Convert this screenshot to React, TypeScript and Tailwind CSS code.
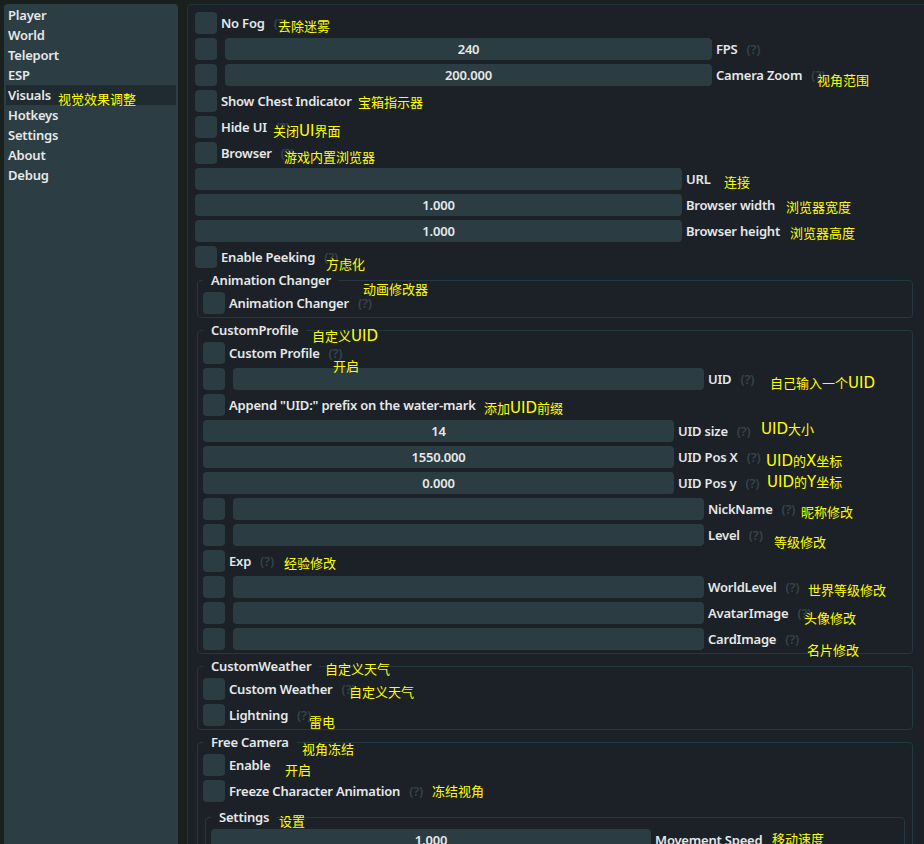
import React from "react";

function Box() {
  return <div className="w-[22px] h-[22px] rounded-[4px] bg-[#2b3c42] shrink-0" />;
}

function Help() {
  return <span className="ml-[9px] pt-[2px] text-[#34444b] whitespace-nowrap">(?)</span>;
}

function CheckRow({ label, help }: { label: string; help?: boolean }) {
  return (
    <div className="flex items-center h-[22px]">
      <Box />
      <span className="ml-1 pt-[2px] whitespace-nowrap">{label}</span>
      {help && <Help />}
    </div>
  );
}

function FieldRow({
  check,
  w,
  value,
  label,
  help,
}: {
  check?: boolean;
  w: string;
  value?: string;
  label: string;
  help?: boolean;
}) {
  return (
    <div className="flex items-center h-[22px]">
      {check && (
        <>
          <Box />
          <div className="w-2 shrink-0" />
        </>
      )}
      <div className={`${w} h-[22px] pt-[2px] rounded-[4px] bg-[#2b3c42] flex items-center justify-center shrink-0`}>
        {value}
      </div>
      <span className="ml-1 pt-[2px] whitespace-nowrap">{label}</span>
      {help && <Help />}
    </div>
  );
}

function Group({ title, children, extra }: { title: string; children: React.ReactNode; extra?: string }) {
  return (
    <fieldset
      className={`mx-[2px] px-[5px] pt-[3px] pb-[3px] border border-[#233840] rounded-[4px] min-w-0 ${extra ?? ""}`}
    >
      <legend className="px-2 leading-[17px] whitespace-nowrap">{title}</legend>
      <div className="flex flex-col gap-1">{children}</div>
    </fieldset>
  );
}

const notes: { t: string; c: string }[] = [
  { t: "去除迷雾", c: "left-[278px] top-[19px]" },
  { t: "视角范围", c: "left-[817px] top-[73px]" },
  { t: "视觉效果调整", c: "left-[58px] top-[92px]" },
  { t: "宝箱指示器", c: "left-[358px] top-[95px]" },
  { t: "关闭UI界面", c: "left-[273px] top-[124px]" },
  { t: "游戏内置浏览器", c: "left-[284px] top-[150px]" },
  { t: "连接", c: "left-[724px] top-[175px]" },
  { t: "浏览器宽度", c: "left-[786px] top-[200px]" },
  { t: "浏览器高度", c: "left-[790px] top-[226px]" },
  { t: "方虑化", c: "left-[326px] top-[257px]" },
  { t: "动画修改器", c: "left-[363px] top-[282px]" },
  { t: "自定义UID", c: "left-[312px] top-[329px]" },
  { t: "开启", c: "left-[333px] top-[359px]" },
  { t: "添加UID前缀", c: "left-[484px] top-[401px]" },
  { t: "自己输入一个UID", c: "left-[770px] top-[376px]" },
  { t: "UID大小", c: "left-[761px] top-[422px]" },
  { t: "UID的X坐标", c: "left-[766px] top-[454px]" },
  { t: "UID的Y坐标", c: "left-[767px] top-[475px]" },
  { t: "昵称修改", c: "left-[801px] top-[505px]" },
  { t: "等级修改", c: "left-[774px] top-[535px]" },
  { t: "经验修改", c: "left-[284px] top-[556px]" },
  { t: "世界等级修改", c: "left-[808px] top-[583px]" },
  { t: "头像修改", c: "left-[804px] top-[611px]" },
  { t: "名片修改", c: "left-[807px] top-[643px]" },
  { t: "自定义天气", c: "left-[325px] top-[662px]" },
  { t: "自定义天气", c: "left-[349px] top-[685px]" },
  { t: "雷电", c: "left-[309px] top-[715px]" },
  { t: "视角冻结", c: "left-[302px] top-[742px]" },
  { t: "开启", c: "left-[285px] top-[763px]" },
  { t: "冻结视角", c: "left-[432px] top-[784px]" },
  { t: "设置", c: "left-[279px] top-[814px]" },
  { t: "移动速度", c: "left-[772px] top-[832px]" },
];

function Note({ t }: { t: string }) {
  const parts = t.split(/([A-Za-z]+)/).filter((p) => p.length > 0);
  return (
    <>
      {parts.map((p, i) =>
        /^[A-Za-z]+$/.test(p) ? (
          <span key={i} className="font-['DejaVu_Sans',sans-serif] text-[15px]">
            {p}
          </span>
        ) : (
          <span key={i}>{p}</span>
        )
      )}
    </>
  );
}

const menu = ["Player", "World", "Teleport", "ESP", "Visuals", "Hotkeys", "Settings", "About", "Debug"];

export default function App() {
  const W = "w-[487px]";
  const G = "w-[471px]";
  const S = "w-[440px]";
  return (
    <div className="relative w-[924px] h-[844px] overflow-hidden bg-[#1a201e] font-['Noto_Sans',sans-serif] font-semibold text-[13px] tracking-[-0.2px] text-[#e6e8e9]">
      <div className="flex items-start gap-[9px] p-[4px]">
        {/* Sidebar */}
        <div className="w-[174px] h-[900px] shrink-0 rounded-[4px] bg-[#2c3d43] px-[2px] pt-[1px] flex flex-col">
          {menu.map((m) => (
            <div
              key={m}
              className={`h-5 pt-[2px] flex items-center px-[2px] ${m === "Visuals" ? "bg-[#1f2b30]" : ""}`}
            >
              {m}
            </div>
          ))}
        </div>

        {/* Main panel */}
        <div className="w-[760px] shrink-0 rounded-[4px] border border-[#21343b] bg-[#1b2127] pl-[7px] pt-[7px] pb-8">
          <div className="w-[720px] flex flex-col gap-1">
            <CheckRow label="No Fog" help />
            <FieldRow check w={W} value="240" label="FPS" help />
            <FieldRow check w={W} value="200.000" label="Camera Zoom" help />
            <CheckRow label="Show Chest Indicator" />
            <CheckRow label="Hide UI" help />
            <CheckRow label="Browser" help />
            <FieldRow w={W} label="URL" />
            <FieldRow w={W} value="1.000" label="Browser width" />
            <FieldRow w={W} value="1.000" label="Browser height" />
            <CheckRow label="Enable Peeking" help />

            <Group title="Animation Changer">
              <CheckRow label="Animation Changer" help />
            </Group>

            <Group title="CustomProfile">
              <CheckRow label="Custom Profile" help />
              <FieldRow check w={G} label="UID" help />
              <CheckRow label={'Append "UID:" prefix on the water-mark'} />
              <FieldRow w={G} value="14" label="UID size" help />
              <FieldRow w={G} value="1550.000" label="UID Pos X" help />
              <FieldRow w={G} value="0.000" label="UID Pos y" help />
              <FieldRow check w={G} label="NickName" help />
              <FieldRow check w={G} label="Level" help />
              <CheckRow label="Exp" help />
              <FieldRow check w={G} label="WorldLevel" help />
              <FieldRow check w={G} label="AvatarImage" help />
              <FieldRow check w={G} label="CardImage" help />
            </Group>

            <Group title="CustomWeather">
              <CheckRow label="Custom Weather" help />
              <CheckRow label="Lightning" help />
            </Group>

            <Group title="Free Camera">
              <CheckRow label="Enable" />
              <CheckRow label="Freeze Character Animation" help />
              <Group title="Settings" extra="mt-[3px]">
                <FieldRow w={S} value="1.000" label="Movement Speed" />
              </Group>
            </Group>
          </div>
        </div>
      </div>

      {/* Yellow annotations overlay */}
      {notes.map((n, i) => (
        <span
          key={i}
          className={`absolute ${n.c} whitespace-nowrap font-['Noto_Sans_CJK_SC',sans-serif] font-normal text-[13px] tracking-normal leading-[14px] text-[#ffff00]`}
        >
          <Note t={n.t} />
        </span>
      ))}
    </div>
  );
}
